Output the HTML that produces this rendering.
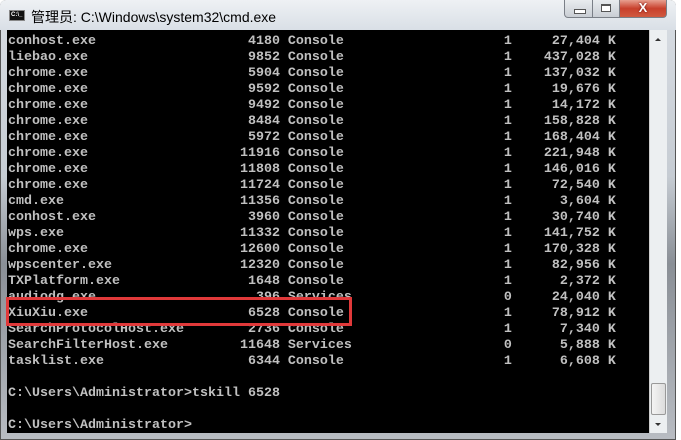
<!DOCTYPE html>
<html><head><meta charset="utf-8"><style>
html,body{margin:0;padding:0;width:681px;height:440px;overflow:hidden;background:#fff;}
.frame{position:absolute;left:0;top:0;width:676px;height:440px;background:linear-gradient(180deg,#d8dde3 0%,#c6ccd3 40%,#8a8f96 60%,#b8bcc2 100%);border-radius:6px 6px 0 0;border:1px solid #555;box-sizing:border-box;}
.title{position:absolute;left:0;top:0;width:676px;height:30px;background:linear-gradient(180deg,#eef1f4,#d9dfe6);border-radius:6px 6px 0 0;}
.ttext{position:absolute;left:31px;top:7px;font:14px "Liberation Sans","Noto Sans CJK SC",sans-serif;color:#000;}
.ticon{position:absolute;left:9px;top:10px;width:16px;height:11px;background:#111;border:1px solid #888;box-sizing:border-box;color:#fff;font:bold 6px "Liberation Sans",sans-serif;line-height:9px;padding-left:1px;}
.btn{position:absolute;top:0;height:18px;border:1px solid #7a7f87;border-top:none;box-sizing:border-box;background:linear-gradient(180deg,#e9ecef,#c9ced4);}
.con{position:absolute;left:7px;top:30px;width:642px;height:403px;background:#000;}
pre{margin:0;position:absolute;left:1px;top:4px;font:bold 13.33px/16px "Liberation Mono",monospace;color:#c0c0c0;letter-spacing:0;}
.sb{position:absolute;left:649px;top:30px;width:18px;height:403px;background:#eceff1;border-left:1px solid #ccc;box-sizing:border-box;}
.red{position:absolute;left:6px;top:297px;width:346px;height:29px;border:3px solid #e0393a;box-sizing:border-box;}
</style></head><body>
<div class="frame"></div>
<div class="title"><div class="ticon">C:\_</div><div class="ttext">管理员: C:\Windows\system32\cmd.exe</div></div>
<div class="btn" style="left:564px;width:29px;border-radius:0 0 0 4px"><div style="position:absolute;left:9px;top:9px;width:10px;height:3px;background:#fff;border:1px solid #555"></div></div>
<div class="btn" style="left:592px;width:28px"><div style="position:absolute;left:8px;top:4px;width:10px;height:8px;border:1px solid #555;background:#fff;box-sizing:border-box;border-top-width:2px"></div></div>
<div class="btn" style="left:619px;width:48px;background:linear-gradient(180deg,#e8a090,#c8402c 50%,#d05a40);border-radius:0 0 4px 0;color:#fff;font:bold 13px 'Liberation Sans',sans-serif;text-align:center;line-height:16px;text-shadow:0 0 2px #600">X</div>
<div class="con"><pre>conhost.exe                   4180 Console                    1     27,404 K
liebao.exe                    9852 Console                    1    437,028 K
chrome.exe                    5904 Console                    1    137,032 K
chrome.exe                    9592 Console                    1     19,676 K
chrome.exe                    9492 Console                    1     14,172 K
chrome.exe                    8484 Console                    1    158,828 K
chrome.exe                    5972 Console                    1    168,404 K
chrome.exe                   11916 Console                    1    221,948 K
chrome.exe                   11808 Console                    1    146,016 K
chrome.exe                   11724 Console                    1     72,540 K
cmd.exe                      11356 Console                    1      3,604 K
conhost.exe                   3960 Console                    1     30,740 K
wps.exe                      11332 Console                    1    141,752 K
chrome.exe                   12600 Console                    1    170,328 K
wpscenter.exe                12320 Console                    1     82,956 K
TXPlatform.exe                1648 Console                    1      2,372 K
audiodg.exe                    396 Services                   0     24,040 K
XiuXiu.exe                    6528 Console                    1     78,912 K
SearchProtocolHost.exe        2736 Console                    1      7,340 K
SearchFilterHost.exe         11648 Services                   0      5,888 K
tasklist.exe                  6344 Console                    1      6,608 K

C:\Users\Administrator>tskill 6528

C:\Users\Administrator></pre></div>
<div class="sb">
<div style="position:absolute;left:5px;top:8px;width:0;height:0;border:3px solid transparent;border-bottom:3px solid #333;border-top:none"></div>
<div style="position:absolute;left:1px;top:353px;width:15px;height:32px;border:1px solid #999;border-radius:2px;background:linear-gradient(90deg,#f4f4f4,#dcdcdc);box-sizing:border-box"></div>
<div style="position:absolute;left:5px;top:393px;width:0;height:0;border:3px solid transparent;border-top:3px solid #333;border-bottom:none"></div>
</div>
<div class="red"></div>
</body></html>
